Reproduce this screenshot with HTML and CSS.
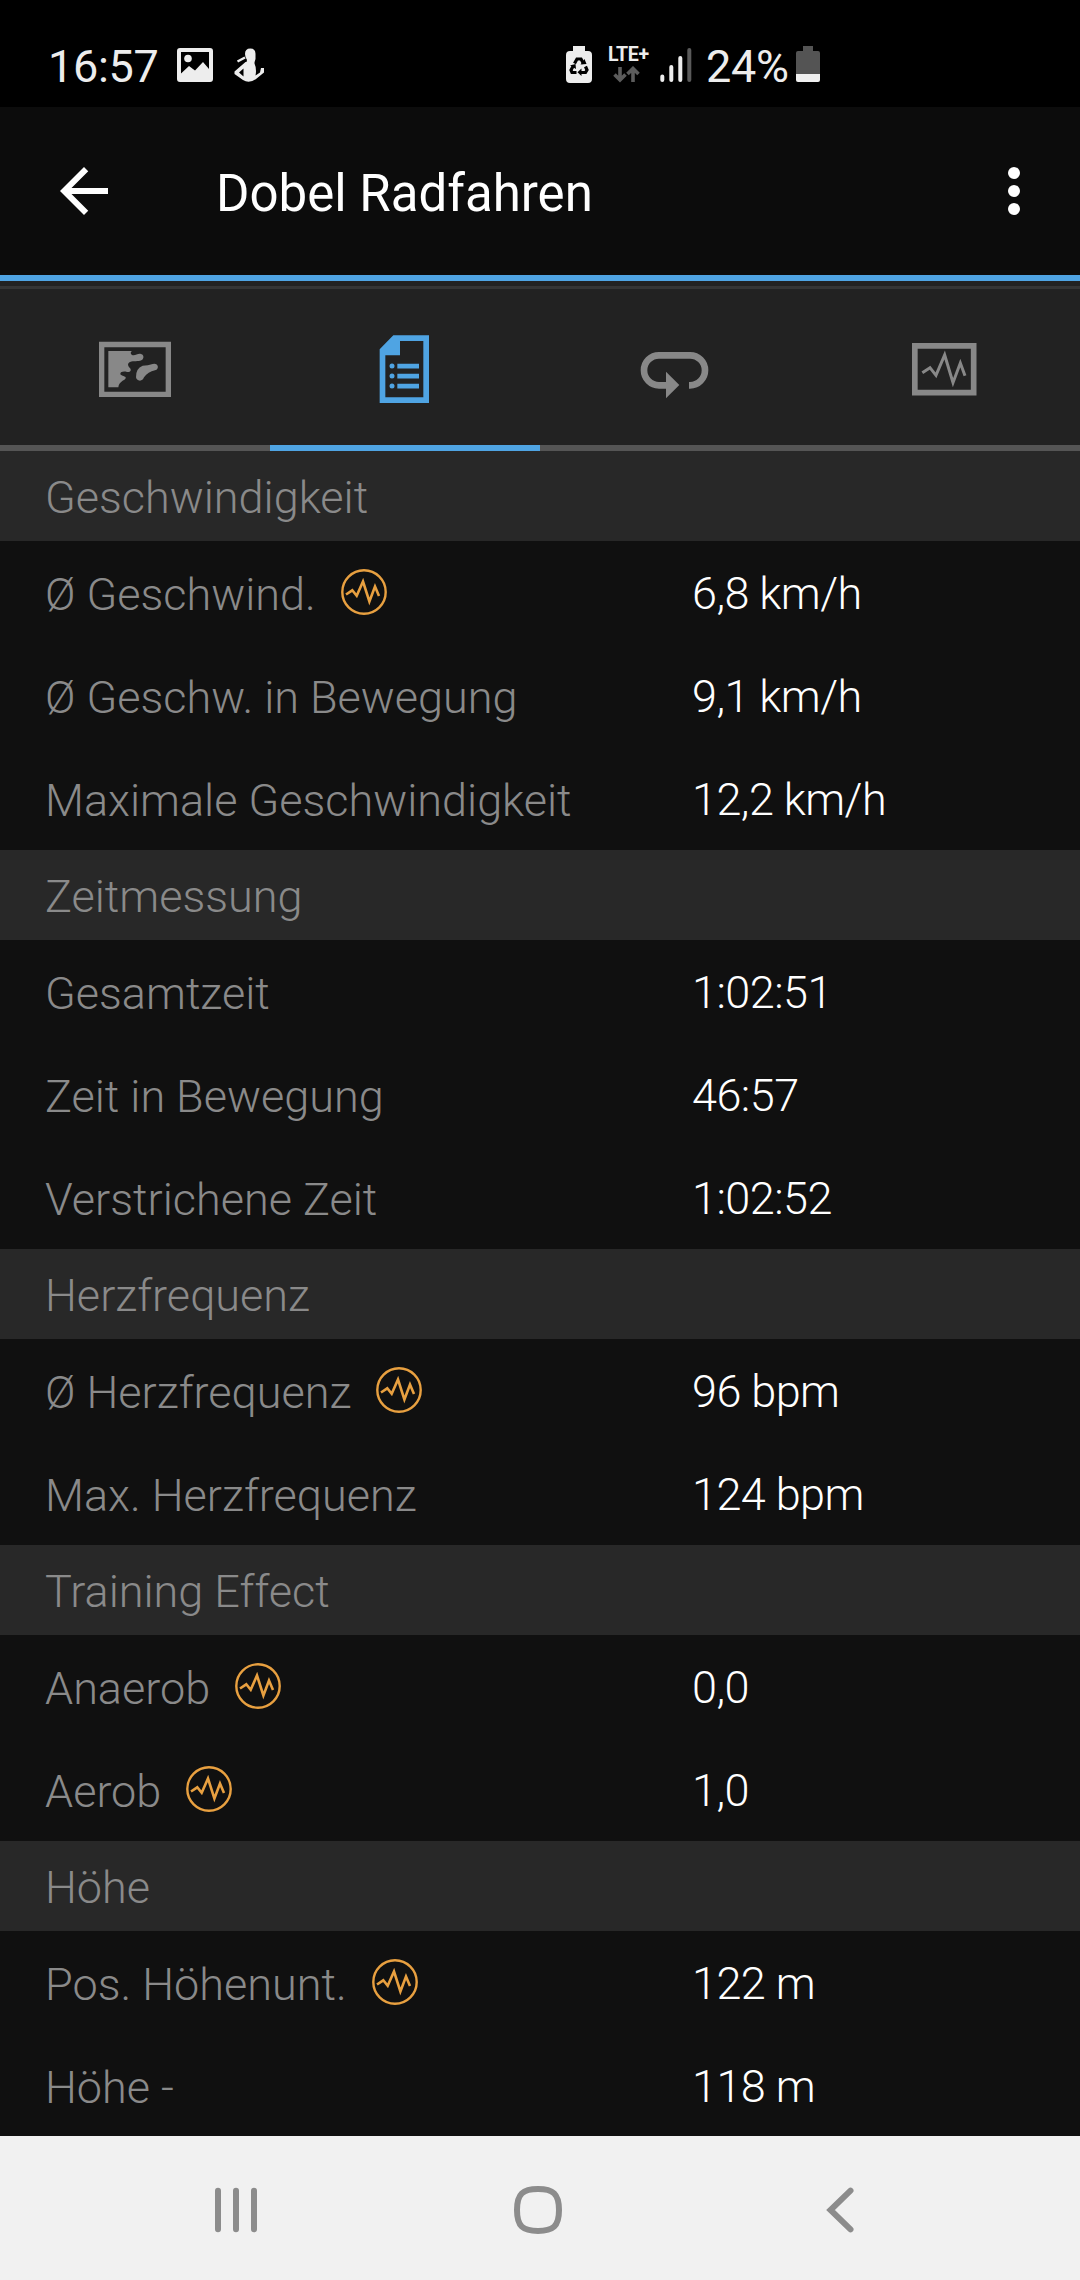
FILE: index.html
```html
<!DOCTYPE html>
<html lang="de">
<head>
<meta charset="utf-8">
<title>Dobel Radfahren</title>
<link rel="stylesheet" href="styles.css">
</head>
<body>
<svg class="defs" width="0" height="0">
  <symbol id="pulse" viewBox="0 0 46 46">
    <circle cx="23" cy="23" r="21.7" fill="none" stroke="#e8a040" stroke-width="2.4"/>
    <path d="M5 25.5 11.3 21.3 15.7 26.7 22 12.5 28.4 32.5 34 17.5 38 27" fill="none" stroke="#e8a040" stroke-width="2.6"/>
  </symbol>
</svg>
<div class="screen">
  <div class="status">
    <span class="clock">16:57</span>
    <svg class="st-picture" width="36" height="34" viewBox="0 0 36 34">
      <path fill="#ededed" fill-rule="evenodd" d="M3 0H33Q36 0 36 3V31Q36 34 33 34H3Q0 34 0 31V3Q0 0 3 0ZM4 4V25.500L12 18 18 22.500 26 14 32 21V4Z"/>
      <circle cx="11" cy="10.500" r="3.800" fill="#ededed"/>
    </svg>
    <svg class="st-person" width="32" height="35" viewBox="0 0 32 35">
      <path fill="#ededed" d="M11 6Q11 0.500 16.300 0.500T21.500 6V11L20 16H12L13 12Q11 9 11 6Z"/>
      <path d="M11 9.500 3.500 13.500" stroke="#ededed" stroke-width="2.500"/>
      <path fill="#ededed" fill-rule="evenodd" d="M11.500 14H20Q23 21 21.500 27.500L26 24.500 27 20H30V24.500L22 31Q15 36 9 32L0.500 26V23.500ZM5 24.500 9.500 28.500V20.500Z"/>
    </svg>
    <svg class="st-recycle" width="26" height="37" viewBox="0 0 26 37">
      <path fill="#ededed" d="M7 0H19V5H22Q26 5 26 9V33Q26 37 22 37H4Q0 37 0 33V9Q0 5 4 5H7Z"/>
      <path d="M8.500 17.500 11 13H15L17.500 17.500M19.500 20.500 21 24 19.500 26.500H14.500M10.500 26.500H6L5 24 7.500 19.500" fill="none" stroke="#000" stroke-width="3.200"/>
      <path d="M14.500 18.500 20.500 18 18.500 13ZM15.500 22.500V30L11.500 26.300ZM4 19.500 9.500 18 10 23Z" fill="#000"/>
    </svg>
    <div class="network">
      <span class="lte">LTE+</span>
      <svg width="28" height="17" viewBox="0 0 28 17">
        <path d="M7 1V13M1.500 8.500 7 14 12.500 8.500M20 16V4M14.500 8 20 2.500 25.500 8" fill="none" stroke="#5c5c5c" stroke-width="3.600"/>
      </svg>
    </div>
    <svg class="st-signal" width="32" height="36" viewBox="0 0 32 36">
      <g stroke="#ededed" stroke-width="4" stroke-linecap="round">
        <path d="M2.300 29.500V33M11.300 20V33M20.300 11V33"/>
        <path d="M29.300 3V33" stroke="#5a5a5a"/>
      </g>
    </svg>
    <span class="percent">24%</span>
    <svg class="st-battery" width="24" height="36" viewBox="0 0 24 36">
      <path fill="#545454" d="M7 0H17V5H22Q24 5 24 7V28H0V7Q0 5 2 5H7Z"/>
      <path fill="#f0f0f0" d="M0 28H24V34Q24 36 22 36H2Q0 36 0 34Z"/>
    </svg>
  </div>

  <header class="appbar">
    <svg width="72" height="72" viewBox="0 0 24 24"><path fill="#fff" d="M20 11H7.830l5.590-5.590L12 4l-8 8 8 8 1.410-1.410L7.830 13H20v-2z"/></svg>
    <h1>Dobel Radfahren</h1>
    <svg width="72" height="72" viewBox="0 0 24 24"><g fill="#fff"><circle cx="12" cy="6" r="2"/><circle cx="12" cy="12" r="2"/><circle cx="12" cy="18" r="2"/></g></svg>
  </header>

  <nav class="tabs">
    <div class="tab">
      <svg width="80" height="80" viewBox="45 21 240 240">
        <path d="M65 73.500H265V223H65Z" fill="none" stroke="#888" stroke-width="16"/>
        <path fill="#888" d="M85 93H156Q149 98 155 104C164 109 171 100 181 101C193 103 193 116 184 121C174 126 161 121 150 126C142 130 143 137 149 143C156 149 151 158 141 156C132 153 121 155 121 161C121 167 134 167 137 172C140 182 117 181 115 202H85Z"/>
        <path fill="#888" d="M168 172Q167 145 188 137Q204 137 218 132Q229 129 233 137Q236 147 225 151Q204 156 192 172Q188 182 180 182Q169 181 168 172Z"/>
      </svg>
    </div>
    <div class="tab active">
      <svg width="80" height="80" viewBox="855 21 240 240">
        <path fill="#4fa4e3" fill-rule="evenodd" d="M940 46H1047V249H899V88ZM960 63V106H916V232H1030V63Z"/>
        <path stroke="#4fa4e3" stroke-width="14" d="M952 138.500H1017M952 168.500H1017M952 198.500H1017"/>
        <g fill="#4fa4e3"><circle cx="936" cy="138" r="7.500"/><circle cx="936" cy="168" r="7.500"/><circle cx="936" cy="198" r="7.500"/></g>
      </svg>
    </div>
    <div class="tab">
      <svg width="80" height="80" viewBox="45 21 240 240">
        <path d="M140 196H117A45 45 0 0 1 117 106H210A45 45 0 0 1 210 196H207" fill="none" stroke="#888" stroke-width="20"/>
        <path fill="#888" d="M138 155 178 195 138 235Z"/>
      </svg>
    </div>
    <div class="tab">
      <svg width="80" height="80" viewBox="855 21 240 240">
        <path d="M884.500 77.500H1061V218H884.500Z" fill="none" stroke="#888" stroke-width="17"/>
        <path d="M907 158 930 143 948 166 974 105 999 188 1021 129 1035 167" fill="none" stroke="#888" stroke-width="9"/>
      </svg>
    </div>
  </nav>

  <main class="stats">
    <h2>Geschwindigkeit</h2>
    <div class="row"><span class="label">Ø Geschwind.<svg class="pulse"><use href="#pulse"/></svg></span><span class="value">6,8 km/h</span></div>
    <div class="row"><span class="label">Ø Geschw. in Bewegung</span><span class="value">9,1 km/h</span></div>
    <div class="row"><span class="label">Maximale Geschwindigkeit</span><span class="value">12,2 km/h</span></div>
    <h2>Zeitmessung</h2>
    <div class="row"><span class="label">Gesamtzeit</span><span class="value">1:02:51</span></div>
    <div class="row"><span class="label">Zeit in Bewegung</span><span class="value">46:57</span></div>
    <div class="row"><span class="label">Verstrichene Zeit</span><span class="value">1:02:52</span></div>
    <h2>Herzfrequenz</h2>
    <div class="row"><span class="label">Ø Herzfrequenz<svg class="pulse"><use href="#pulse"/></svg></span><span class="value">96 bpm</span></div>
    <div class="row"><span class="label">Max. Herzfrequenz</span><span class="value">124 bpm</span></div>
    <h2>Training Effect</h2>
    <div class="row"><span class="label">Anaerob<svg class="pulse"><use href="#pulse"/></svg></span><span class="value">0,0</span></div>
    <div class="row"><span class="label">Aerob<svg class="pulse"><use href="#pulse"/></svg></span><span class="value">1,0</span></div>
    <h2>Höhe</h2>
    <div class="row"><span class="label">Pos. Höhenunt.<svg class="pulse"><use href="#pulse"/></svg></span><span class="value">122 m</span></div>
    <div class="row"><span class="label">Höhe -</span><span class="value">118 m</span></div>
  </main>

  <footer class="navbar">
    <svg width="50" height="50" viewBox="0 0 50 50"><path d="M7 5.700V44.300M25 5.700V44.300M43 5.700V44.300" stroke="#8c8c8c" stroke-width="6" stroke-linecap="round"/></svg>
    <svg width="50" height="50" viewBox="0 0 50 50"><path d="M25 4C40 4 46 8.500 46 25S40 46 25 46 4 41.500 4 25 10 4 25 4Z" fill="none" stroke="#8c8c8c" stroke-width="6"/></svg>
    <svg width="50" height="50" viewBox="0 0 50 50"><path d="M35.500 5.700 15.500 25 35.500 44.300" fill="none" stroke="#8c8c8c" stroke-width="6" stroke-linecap="round"/></svg>
  </footer>
</div>
</body>
</html>
```
FILE: styles.css
```css
* { box-sizing: border-box; }
body { margin: 0; background: #000; font-family: Roboto, sans-serif; }
.defs { position: absolute; }
svg { display: block; flex: none; }
.screen { display: flex; flex-direction: column; width: 1080px; height: 2280px; overflow: hidden; }

.status { flex: none; display: flex; align-items: flex-start; height: 107px; padding-left: 48px; background: #000; color: #ededed; }
.clock, .percent { flex: none; font-size: 45px; line-height: 52px; margin-top: 41px; letter-spacing: -0.3px; white-space: nowrap; }
.clock { width: 129px; }
.st-picture { margin-top: 48px; }
.st-person { margin: 48px 0 0 21px; }
.st-recycle { margin: 46px 0 0 300px; }
.network { width: 52px; margin: 44px 0 0 16px; }
.lte { display: block; height: 22px; font-size: 19.5px; line-height: 21px; font-weight: 700; letter-spacing: -0.3px; }
.network svg { margin-left: 5px; }
.st-signal { margin: 47px 0 0 0; }
.percent { width: 90px; margin-left: 14px; }
.st-battery { margin-top: 46px; }

.appbar { flex: none; display: flex; align-items: center; height: 174px; padding: 0 30px 0 48px; background: #0c0c0c; border-bottom: 6px solid #4fa4e3; }
.appbar h1 { flex: 1; margin: 0 0 0 96px; padding-top: 6px; font-size: 51px; line-height: 60px; font-weight: 400; color: #fff; }

.tabs { flex: none; display: grid; grid-template-columns: repeat(4, 1fr); height: 170px; padding-top: 5px; background: #222; }
.tab { display: flex; align-items: center; justify-content: center; border-top: 3px solid #353535; border-bottom: 6px solid #555; }
.tab.active { border-bottom-color: #4fa4e3; }

.stats { flex: 1; min-height: 0; overflow: hidden; background: #101010; font-size: 45px; font-weight: 300; }
.stats h2 { height: 90px; margin: 0; padding: 2px 0 0 45px; background: #282828; color: #8a8a8a; font-size: 45px; line-height: 90px; font-weight: 300; }
.row { display: grid; grid-template-columns: 647px 1fr; height: 103px; padding-left: 45px; line-height: 103px; white-space: nowrap; }
.label { display: flex; height: 103px; padding-top: 2px; color: #8a8a8a; }
.value { color: #fff; padding-top: 1px; letter-spacing: -0.55px; }
.pulse { width: 46px; height: 46px; margin: 26px 0 0 25px; }

.navbar { flex: none; display: flex; height: 144px; padding: 49px 0 0 211px; gap: 252px; background: #f1f1f1; }
```
